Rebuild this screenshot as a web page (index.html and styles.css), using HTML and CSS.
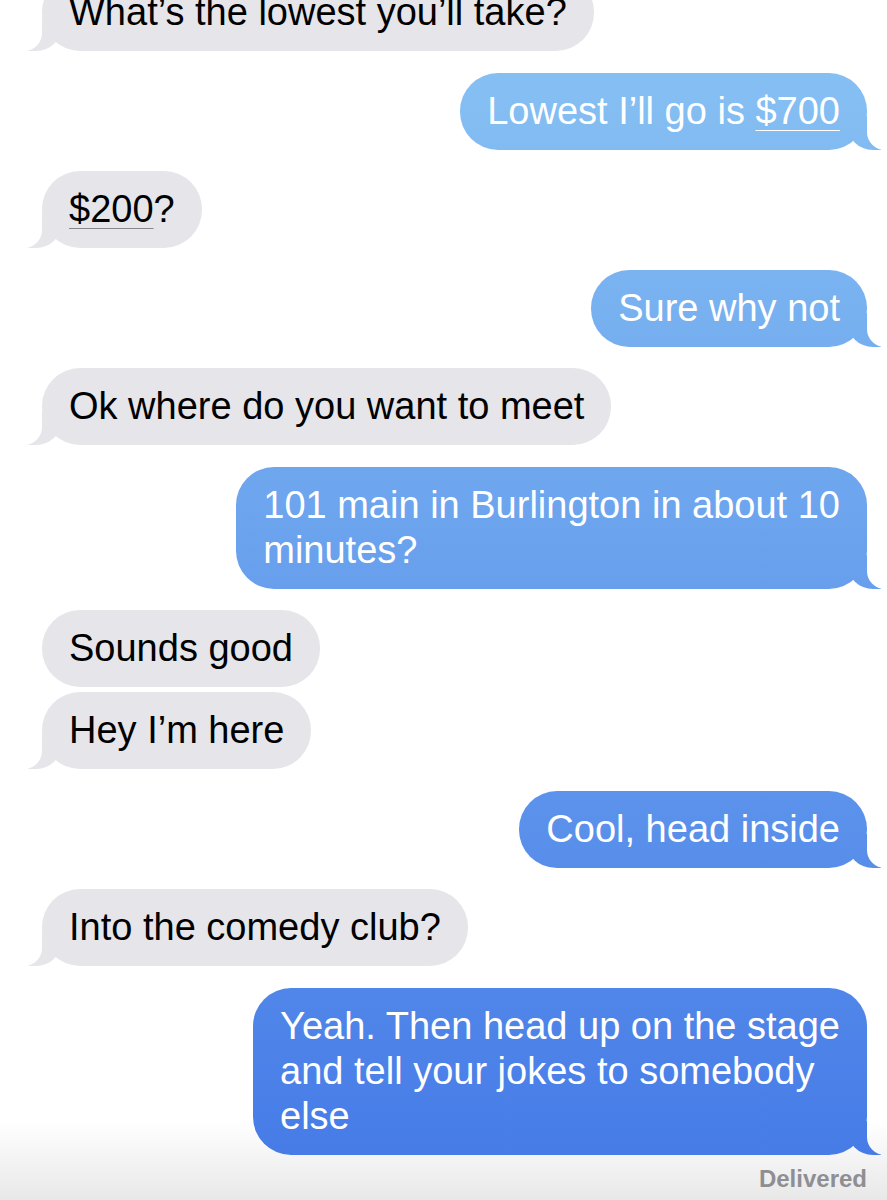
FILE: index.html
```html
<!DOCTYPE html>
<html lang="en">
<head>
  <meta charset="UTF-8">
  <title>Messages</title>
  <link rel="stylesheet" href="styles.css">
</head>
<body>
  <div class="screen">
    <div class="thread">
      <div class="msg received tail">What’s the lowest you’ll take?</div>
      <div class="msg sent tail">Lowest I’ll go is <span class="link">$700</span></div>
      <div class="msg received tail"><span class="link dark">$200</span>?</div>
      <div class="msg sent tail">Sure why not</div>
      <div class="msg received tail">Ok where do you want to meet</div>
      <div class="msg sent tail">101 main in Burlington in about 10<br>minutes?</div>
      <div class="msg received">Sounds good</div>
      <div class="msg received tail next">Hey I’m here</div>
      <div class="msg sent tail">Cool, head inside</div>
      <div class="msg received tail">Into the comedy club?</div>
      <div class="msg sent tail">Yeah. Then head up on the stage<br>and tell your jokes to somebody<br>else</div>
      <div class="status">Delivered</div>
    </div>
  </div>
</body>
</html>
```

FILE: styles.css
```css
:root {
  --page: linear-gradient(to bottom, #fff 0, #fff 1120px, #e8e8e8 1200px);
  --blue: linear-gradient(to bottom, #8ac4f3, #4479e7);
  --gray: #e5e5ea;
}

body {
  margin: 0;
  font-family: "Liberation Sans", Arial, sans-serif;
}

.screen {
  height: 1200px;
  overflow: hidden;
  background: var(--page);
}

.thread {
  display: flex;
  flex-direction: column;
  margin-top: -26px;
  padding: 0 20px 0 42px;
}

.msg {
  position: relative;
  z-index: 0;
  box-sizing: border-box;
  max-width: 660px;
  margin-top: 21.5px;
  padding: 16px 27px;
  border-radius: 38px;
  font-size: 38px;
  line-height: 45px;
}

.msg:first-child {
  margin-top: 0;
}

.msg.next {
  margin-top: 5px;
}

.received {
  align-self: flex-start;
  background: var(--gray);
  color: #000;
}

.sent {
  align-self: flex-end;
  background: var(--blue) fixed;
  color: #fff;
}

/* bubble tails */
.tail::before,
.tail::after {
  content: "";
  position: absolute;
  z-index: -1;
  bottom: 0;
  height: 34px;
}

.sent.tail::before {
  right: -14px;
  width: 34px;
  background: var(--blue) fixed;
  border-bottom-left-radius: 26px;
}

.sent.tail::after {
  right: -22px;
  width: 22px;
  background: var(--page) fixed;
  border-bottom-left-radius: 18px;
}

.received.tail::before {
  left: -14px;
  width: 34px;
  background: var(--gray);
  border-bottom-right-radius: 26px;
}

.received.tail::after {
  left: -22px;
  width: 22px;
  background: var(--page) fixed;
  border-bottom-right-radius: 18px;
}

.link {
  text-decoration: underline;
  text-decoration-thickness: 1px;
  text-underline-offset: 6px;
}

.link.dark {
  text-decoration-color: #888;
}

.status {
  align-self: flex-end;
  margin-top: 10px;
  font-size: 24px;
  font-weight: bold;
  color: #8e8e93;
}
```
